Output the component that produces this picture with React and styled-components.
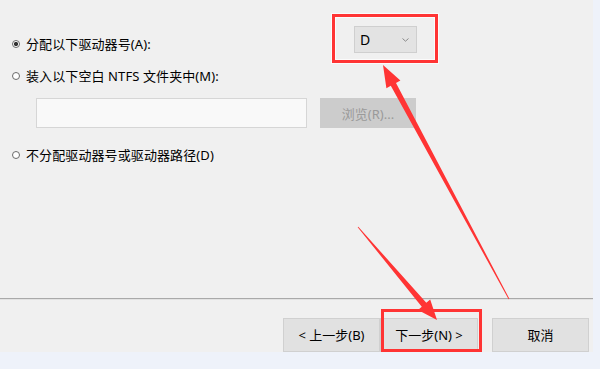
import React from 'react'
import styled, {createGlobalStyle} from 'styled-components'

const GlobalStyle = createGlobalStyle`
	html, body {
		margin: 0;
		padding: 0;
		background: #eef2fa;
	}
	body {
		font-family: 'Noto Sans', 'Noto Sans CJK SC', sans-serif;
		font-size: 13px;
		color: #000;
	}
`

const Page = styled.div`
	position: relative;
	width: 600px;
	height: 369px;
	overflow: hidden;
	background: #eef2fa;
`

const Dialog = styled.div`
	width: 593px;
	height: 352px;
	background: #f0f0f0;
	display: flex;
	flex-direction: column;
	overflow: hidden;
`

const Options = styled.div`
	flex: 1;
	display: flex;
	flex-direction: column;
	padding: 26px 0 0 12px;
`

const OptionRow = styled.div`
	display: flex;
	align-items: flex-end;
	margin-top: ${p => p.$gap || 0}px;
`

const Radio = styled.label`
	display: flex;
	align-items: center;
	gap: 6px;
	line-height: 18px;
	width: ${p => p.$width ? p.$width + 'px' : 'auto'};
	white-space: nowrap;
	letter-spacing: 0.1px;
`

const Dot = styled.span`
	width: 8px;
	height: 8px;
	box-sizing: border-box;
	border-radius: 50%;
	border: 1px solid #6b6b6b;
	background: ${p => p.$checked ? 'radial-gradient(circle, #333 0 1.8px, #fff 2.4px)' : '#fff'};
`

const Select = styled.div`
	width: 63px;
	height: 27px;
	box-sizing: border-box;
	background: #e3e3e3;
	border: 1px solid #cfcfcf;
	display: flex;
	align-items: center;
	justify-content: space-between;
	padding: 0 7px 0 5px;
	font-size: 14px;
`

const PathRow = styled.div`
	display: flex;
	gap: 13px;
	margin: 13px 0 0 24px;
`

const PathInput = styled.div`
	width: 271px;
	height: 30px;
	box-sizing: border-box;
	background: #f9f9f9;
	border: 1px solid #d6d6d6;
`

const BrowseButton = styled.div`
	width: 96px;
	height: 30px;
	background: #cccccc;
	color: #9a9a9a;
	display: flex;
	align-items: center;
	justify-content: center;
`

const Separator = styled.div`
	height: 0;
	border-top: 1px solid #a9a9a9;
	border-bottom: 1px solid #e2e2e2;
`

const Footer = styled.div`
	display: flex;
	justify-content: flex-end;
	padding: 18px 4px 0 0;
`

const Button = styled.div`
	width: ${p => p.$width || 97}px;
	height: 34px;
	box-sizing: border-box;
	background: #e1e1e1;
	border: 1px solid #d0d0d0;
	margin-left: ${p => p.$gap || 0}px;
	display: flex;
	align-items: flex-start;
	justify-content: center;
	padding-top: 7px;
	line-height: 18px;
`

const Annotations = styled.svg`
	position: absolute;
	left: 0;
	top: 0;
	pointer-events: none;
`

function Chevron() {
	return (
		<svg width='7' height='4' viewBox='0 0 7 4'>
			<path d='M0.5 0.5 L3.5 3.2 L6.5 0.5' fill='none' stroke='#8a8a8a' strokeWidth='1'/>
		</svg>
	)
}

export default function App() {
	return (
		<Page>
			<GlobalStyle/>
			<Dialog>
				<Options>
					<OptionRow>
						<Radio $width={342}><Dot $checked/>分配以下驱动器号(A):</Radio>
						<Select>D<Chevron/></Select>
					</OptionRow>
					<OptionRow $gap={14}>
						<Radio><Dot/>装入以下空白 NTFS 文件夹中(M):</Radio>
					</OptionRow>
					<PathRow>
						<PathInput/>
						<BrowseButton>浏览(R)...</BrowseButton>
					</PathRow>
					<OptionRow $gap={18}>
						<Radio><Dot/>不分配驱动器号或驱动器路径(D)</Radio>
					</OptionRow>
				</Options>
				<Separator/>
				<Footer>
					<Button>&lt; 上一步(B)</Button>
					<Button $width={98}>下一步(N) &gt;</Button>
					<Button $gap={14}>取消</Button>
				</Footer>
			</Dialog>
			<Annotations width='600' height='369' viewBox='0 0 600 369'>
				<rect x='333.5' y='15.5' width='103' height='46' fill='none' stroke='#fff' strokeWidth='5' opacity='0.7'/>
				<rect x='333.5' y='15.5' width='103' height='46' fill='none' stroke='#ff3434' strokeWidth='3'/>
				<rect x='382.5' y='310.5' width='98' height='40' fill='none' stroke='#ff3434' strokeWidth='3'/>
				<polygon fill='#ff3434' points='509.4,298.8 396,83 400.4,80.6 383,65 386.4,88.2 390.8,85.8 508.6,299.2'/>
				<polygon fill='#ff3434' points='358.3,226.7 426.3,302.8 430.2,299.6 437,320 418,309.9 421.8,306.7 357.7,227.3'/>
			</Annotations>
		</Page>
	)
}
